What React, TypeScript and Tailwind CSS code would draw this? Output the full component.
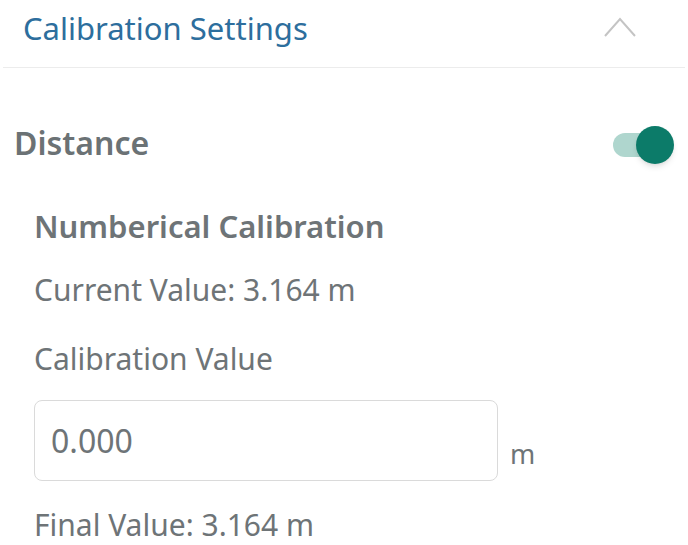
import React, { useState } from 'react';

const font = { fontFamily: '"Noto Sans", "Liberation Sans", sans-serif' };

export default function App() {
  const [enabled, setEnabled] = useState(true);
  const [value, setValue] = useState('0.000');

  return (
    <div className="w-[688px] h-[545px] bg-white overflow-hidden" style={font}>
      {/* Header */}
      <div className="flex items-start justify-between h-[68px] pl-[20px] pr-[48px] pt-[13px] border-b border-[#ececec] mx-[3px]">
        <span className="text-[31px] text-[#2d6e9d] leading-none">Calibration Settings</span>
        <svg width="34" height="22" viewBox="0 0 34 22" fill="none" className="mt-[3px]">
          <path d="M2 20 L17 3 L32 20" stroke="#c4c4c4" strokeWidth="2" />
        </svg>
      </div>

      {/* Distance row */}
      <div className="flex items-center justify-between pl-[14px] pr-[14px] pt-[57px]">
        <span className="text-[32px] font-semibold text-[#6b7275] leading-none mb-[5px]">Distance</span>
        <button
          onClick={() => setEnabled(!enabled)}
          className={`relative w-[64px] h-[40px] flex items-center ${enabled ? 'justify-end' : 'justify-start'}`}
        >
          <span className={`absolute left-[3px] right-[14px] h-[24px] rounded-full ${enabled ? 'bg-[#afd6ce]' : 'bg-[#d5d5d5]'}`} />
          <span className={`relative w-[38px] h-[38px] rounded-full shadow-md ${enabled ? 'bg-[#0c7b69]' : 'bg-white'}`} />
        </button>
      </div>

      {/* Calibration block */}
      <div className="pl-[34px] pt-[46px] flex flex-col text-[#6e7477]">
        <span className="text-[31px] font-semibold leading-none">Numberical Calibration</span>
        <span className="text-[30px] leading-none mt-[33px]">Current Value: 3.164 m</span>
        <span className="text-[30px] leading-none mt-[39px]">Calibration Value</span>
        <div className="flex items-end gap-[12px] mt-[26px]">
          <input
            value={value}
            onChange={(e) => setValue(e.target.value)}
            className="w-[464px] h-[81px] border border-[#dadada] rounded-[8px] px-[16px] text-[32px] text-[#6e7477] outline-none"
            style={font}
          />
          <span className="text-[27px] leading-none mb-[14px]">m</span>
        </div>
        <span className="text-[30px] leading-none mt-[29px]">Final Value: 3.164 m</span>
      </div>
    </div>
  );
}
